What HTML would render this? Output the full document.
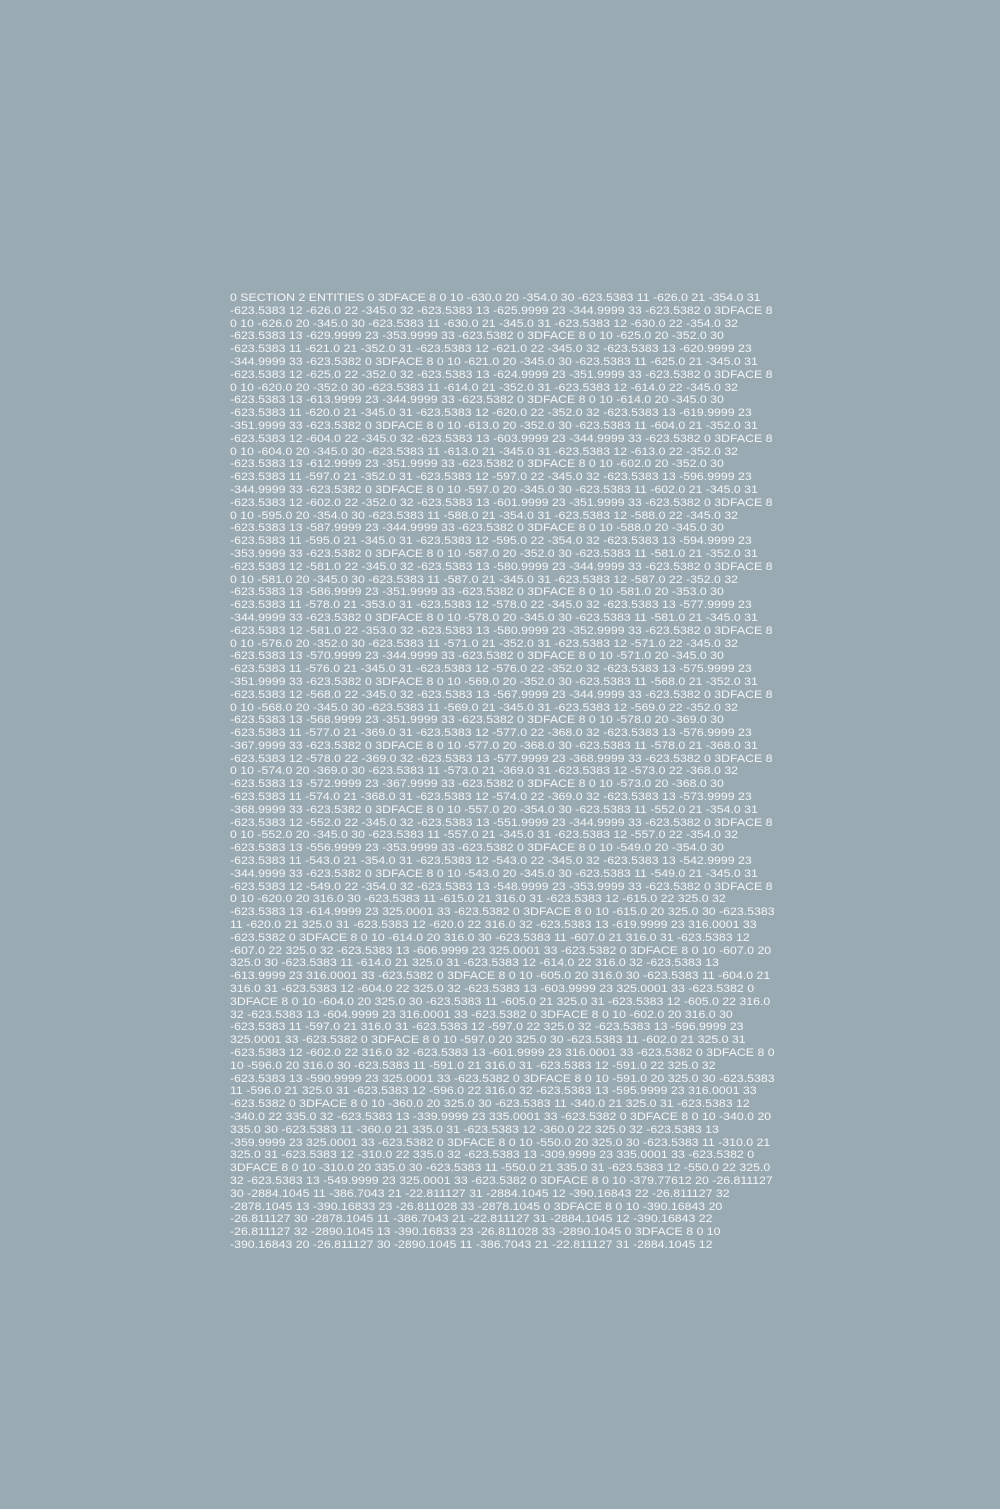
<!DOCTYPE html>
<html><head><meta charset="utf-8"><style>
html,body{margin:0;padding:0;}
body{width:1000px;height:1509px;background:#9aaab2;overflow:hidden;position:relative;}
#t{position:absolute;left:230px;top:292px;font-family:"Liberation Sans",sans-serif;font-size:11px;line-height:12.81px;color:#f4f7f8;white-space:nowrap;transform:scaleX(1.12);transform-origin:0 0;}
#t div{height:12.81px;}
</style></head><body><div id="t">
<div>0 SECTION 2 ENTITIES 0 3DFACE 8 0 10 -630.0 20 -354.0 30 -623.5383 11 -626.0 21 -354.0 31</div>
<div>-623.5383 12 -626.0 22 -345.0 32 -623.5383 13 -625.9999 23 -344.9999 33 -623.5382 0 3DFACE 8</div>
<div>0 10 -626.0 20 -345.0 30 -623.5383 11 -630.0 21 -345.0 31 -623.5383 12 -630.0 22 -354.0 32</div>
<div>-623.5383 13 -629.9999 23 -353.9999 33 -623.5382 0 3DFACE 8 0 10 -625.0 20 -352.0 30</div>
<div>-623.5383 11 -621.0 21 -352.0 31 -623.5383 12 -621.0 22 -345.0 32 -623.5383 13 -620.9999 23</div>
<div>-344.9999 33 -623.5382 0 3DFACE 8 0 10 -621.0 20 -345.0 30 -623.5383 11 -625.0 21 -345.0 31</div>
<div>-623.5383 12 -625.0 22 -352.0 32 -623.5383 13 -624.9999 23 -351.9999 33 -623.5382 0 3DFACE 8</div>
<div>0 10 -620.0 20 -352.0 30 -623.5383 11 -614.0 21 -352.0 31 -623.5383 12 -614.0 22 -345.0 32</div>
<div>-623.5383 13 -613.9999 23 -344.9999 33 -623.5382 0 3DFACE 8 0 10 -614.0 20 -345.0 30</div>
<div>-623.5383 11 -620.0 21 -345.0 31 -623.5383 12 -620.0 22 -352.0 32 -623.5383 13 -619.9999 23</div>
<div>-351.9999 33 -623.5382 0 3DFACE 8 0 10 -613.0 20 -352.0 30 -623.5383 11 -604.0 21 -352.0 31</div>
<div>-623.5383 12 -604.0 22 -345.0 32 -623.5383 13 -603.9999 23 -344.9999 33 -623.5382 0 3DFACE 8</div>
<div>0 10 -604.0 20 -345.0 30 -623.5383 11 -613.0 21 -345.0 31 -623.5383 12 -613.0 22 -352.0 32</div>
<div>-623.5383 13 -612.9999 23 -351.9999 33 -623.5382 0 3DFACE 8 0 10 -602.0 20 -352.0 30</div>
<div>-623.5383 11 -597.0 21 -352.0 31 -623.5383 12 -597.0 22 -345.0 32 -623.5383 13 -596.9999 23</div>
<div>-344.9999 33 -623.5382 0 3DFACE 8 0 10 -597.0 20 -345.0 30 -623.5383 11 -602.0 21 -345.0 31</div>
<div>-623.5383 12 -602.0 22 -352.0 32 -623.5383 13 -601.9999 23 -351.9999 33 -623.5382 0 3DFACE 8</div>
<div>0 10 -595.0 20 -354.0 30 -623.5383 11 -588.0 21 -354.0 31 -623.5383 12 -588.0 22 -345.0 32</div>
<div>-623.5383 13 -587.9999 23 -344.9999 33 -623.5382 0 3DFACE 8 0 10 -588.0 20 -345.0 30</div>
<div>-623.5383 11 -595.0 21 -345.0 31 -623.5383 12 -595.0 22 -354.0 32 -623.5383 13 -594.9999 23</div>
<div>-353.9999 33 -623.5382 0 3DFACE 8 0 10 -587.0 20 -352.0 30 -623.5383 11 -581.0 21 -352.0 31</div>
<div>-623.5383 12 -581.0 22 -345.0 32 -623.5383 13 -580.9999 23 -344.9999 33 -623.5382 0 3DFACE 8</div>
<div>0 10 -581.0 20 -345.0 30 -623.5383 11 -587.0 21 -345.0 31 -623.5383 12 -587.0 22 -352.0 32</div>
<div>-623.5383 13 -586.9999 23 -351.9999 33 -623.5382 0 3DFACE 8 0 10 -581.0 20 -353.0 30</div>
<div>-623.5383 11 -578.0 21 -353.0 31 -623.5383 12 -578.0 22 -345.0 32 -623.5383 13 -577.9999 23</div>
<div>-344.9999 33 -623.5382 0 3DFACE 8 0 10 -578.0 20 -345.0 30 -623.5383 11 -581.0 21 -345.0 31</div>
<div>-623.5383 12 -581.0 22 -353.0 32 -623.5383 13 -580.9999 23 -352.9999 33 -623.5382 0 3DFACE 8</div>
<div>0 10 -576.0 20 -352.0 30 -623.5383 11 -571.0 21 -352.0 31 -623.5383 12 -571.0 22 -345.0 32</div>
<div>-623.5383 13 -570.9999 23 -344.9999 33 -623.5382 0 3DFACE 8 0 10 -571.0 20 -345.0 30</div>
<div>-623.5383 11 -576.0 21 -345.0 31 -623.5383 12 -576.0 22 -352.0 32 -623.5383 13 -575.9999 23</div>
<div>-351.9999 33 -623.5382 0 3DFACE 8 0 10 -569.0 20 -352.0 30 -623.5383 11 -568.0 21 -352.0 31</div>
<div>-623.5383 12 -568.0 22 -345.0 32 -623.5383 13 -567.9999 23 -344.9999 33 -623.5382 0 3DFACE 8</div>
<div>0 10 -568.0 20 -345.0 30 -623.5383 11 -569.0 21 -345.0 31 -623.5383 12 -569.0 22 -352.0 32</div>
<div>-623.5383 13 -568.9999 23 -351.9999 33 -623.5382 0 3DFACE 8 0 10 -578.0 20 -369.0 30</div>
<div>-623.5383 11 -577.0 21 -369.0 31 -623.5383 12 -577.0 22 -368.0 32 -623.5383 13 -576.9999 23</div>
<div>-367.9999 33 -623.5382 0 3DFACE 8 0 10 -577.0 20 -368.0 30 -623.5383 11 -578.0 21 -368.0 31</div>
<div>-623.5383 12 -578.0 22 -369.0 32 -623.5383 13 -577.9999 23 -368.9999 33 -623.5382 0 3DFACE 8</div>
<div>0 10 -574.0 20 -369.0 30 -623.5383 11 -573.0 21 -369.0 31 -623.5383 12 -573.0 22 -368.0 32</div>
<div>-623.5383 13 -572.9999 23 -367.9999 33 -623.5382 0 3DFACE 8 0 10 -573.0 20 -368.0 30</div>
<div>-623.5383 11 -574.0 21 -368.0 31 -623.5383 12 -574.0 22 -369.0 32 -623.5383 13 -573.9999 23</div>
<div>-368.9999 33 -623.5382 0 3DFACE 8 0 10 -557.0 20 -354.0 30 -623.5383 11 -552.0 21 -354.0 31</div>
<div>-623.5383 12 -552.0 22 -345.0 32 -623.5383 13 -551.9999 23 -344.9999 33 -623.5382 0 3DFACE 8</div>
<div>0 10 -552.0 20 -345.0 30 -623.5383 11 -557.0 21 -345.0 31 -623.5383 12 -557.0 22 -354.0 32</div>
<div>-623.5383 13 -556.9999 23 -353.9999 33 -623.5382 0 3DFACE 8 0 10 -549.0 20 -354.0 30</div>
<div>-623.5383 11 -543.0 21 -354.0 31 -623.5383 12 -543.0 22 -345.0 32 -623.5383 13 -542.9999 23</div>
<div>-344.9999 33 -623.5382 0 3DFACE 8 0 10 -543.0 20 -345.0 30 -623.5383 11 -549.0 21 -345.0 31</div>
<div>-623.5383 12 -549.0 22 -354.0 32 -623.5383 13 -548.9999 23 -353.9999 33 -623.5382 0 3DFACE 8</div>
<div>0 10 -620.0 20 316.0 30 -623.5383 11 -615.0 21 316.0 31 -623.5383 12 -615.0 22 325.0 32</div>
<div>-623.5383 13 -614.9999 23 325.0001 33 -623.5382 0 3DFACE 8 0 10 -615.0 20 325.0 30 -623.5383</div>
<div>11 -620.0 21 325.0 31 -623.5383 12 -620.0 22 316.0 32 -623.5383 13 -619.9999 23 316.0001 33</div>
<div>-623.5382 0 3DFACE 8 0 10 -614.0 20 316.0 30 -623.5383 11 -607.0 21 316.0 31 -623.5383 12</div>
<div>-607.0 22 325.0 32 -623.5383 13 -606.9999 23 325.0001 33 -623.5382 0 3DFACE 8 0 10 -607.0 20</div>
<div>325.0 30 -623.5383 11 -614.0 21 325.0 31 -623.5383 12 -614.0 22 316.0 32 -623.5383 13</div>
<div>-613.9999 23 316.0001 33 -623.5382 0 3DFACE 8 0 10 -605.0 20 316.0 30 -623.5383 11 -604.0 21</div>
<div>316.0 31 -623.5383 12 -604.0 22 325.0 32 -623.5383 13 -603.9999 23 325.0001 33 -623.5382 0</div>
<div>3DFACE 8 0 10 -604.0 20 325.0 30 -623.5383 11 -605.0 21 325.0 31 -623.5383 12 -605.0 22 316.0</div>
<div>32 -623.5383 13 -604.9999 23 316.0001 33 -623.5382 0 3DFACE 8 0 10 -602.0 20 316.0 30</div>
<div>-623.5383 11 -597.0 21 316.0 31 -623.5383 12 -597.0 22 325.0 32 -623.5383 13 -596.9999 23</div>
<div>325.0001 33 -623.5382 0 3DFACE 8 0 10 -597.0 20 325.0 30 -623.5383 11 -602.0 21 325.0 31</div>
<div>-623.5383 12 -602.0 22 316.0 32 -623.5383 13 -601.9999 23 316.0001 33 -623.5382 0 3DFACE 8 0</div>
<div>10 -596.0 20 316.0 30 -623.5383 11 -591.0 21 316.0 31 -623.5383 12 -591.0 22 325.0 32</div>
<div>-623.5383 13 -590.9999 23 325.0001 33 -623.5382 0 3DFACE 8 0 10 -591.0 20 325.0 30 -623.5383</div>
<div>11 -596.0 21 325.0 31 -623.5383 12 -596.0 22 316.0 32 -623.5383 13 -595.9999 23 316.0001 33</div>
<div>-623.5382 0 3DFACE 8 0 10 -360.0 20 325.0 30 -623.5383 11 -340.0 21 325.0 31 -623.5383 12</div>
<div>-340.0 22 335.0 32 -623.5383 13 -339.9999 23 335.0001 33 -623.5382 0 3DFACE 8 0 10 -340.0 20</div>
<div>335.0 30 -623.5383 11 -360.0 21 335.0 31 -623.5383 12 -360.0 22 325.0 32 -623.5383 13</div>
<div>-359.9999 23 325.0001 33 -623.5382 0 3DFACE 8 0 10 -550.0 20 325.0 30 -623.5383 11 -310.0 21</div>
<div>325.0 31 -623.5383 12 -310.0 22 335.0 32 -623.5383 13 -309.9999 23 335.0001 33 -623.5382 0</div>
<div>3DFACE 8 0 10 -310.0 20 335.0 30 -623.5383 11 -550.0 21 335.0 31 -623.5383 12 -550.0 22 325.0</div>
<div>32 -623.5383 13 -549.9999 23 325.0001 33 -623.5382 0 3DFACE 8 0 10 -379.77612 20 -26.811127</div>
<div>30 -2884.1045 11 -386.7043 21 -22.811127 31 -2884.1045 12 -390.16843 22 -26.811127 32</div>
<div>-2878.1045 13 -390.16833 23 -26.811028 33 -2878.1045 0 3DFACE 8 0 10 -390.16843 20</div>
<div>-26.811127 30 -2878.1045 11 -386.7043 21 -22.811127 31 -2884.1045 12 -390.16843 22</div>
<div>-26.811127 32 -2890.1045 13 -390.16833 23 -26.811028 33 -2890.1045 0 3DFACE 8 0 10</div>
<div>-390.16843 20 -26.811127 30 -2890.1045 11 -386.7043 21 -22.811127 31 -2884.1045 12</div>
</div></body></html>
